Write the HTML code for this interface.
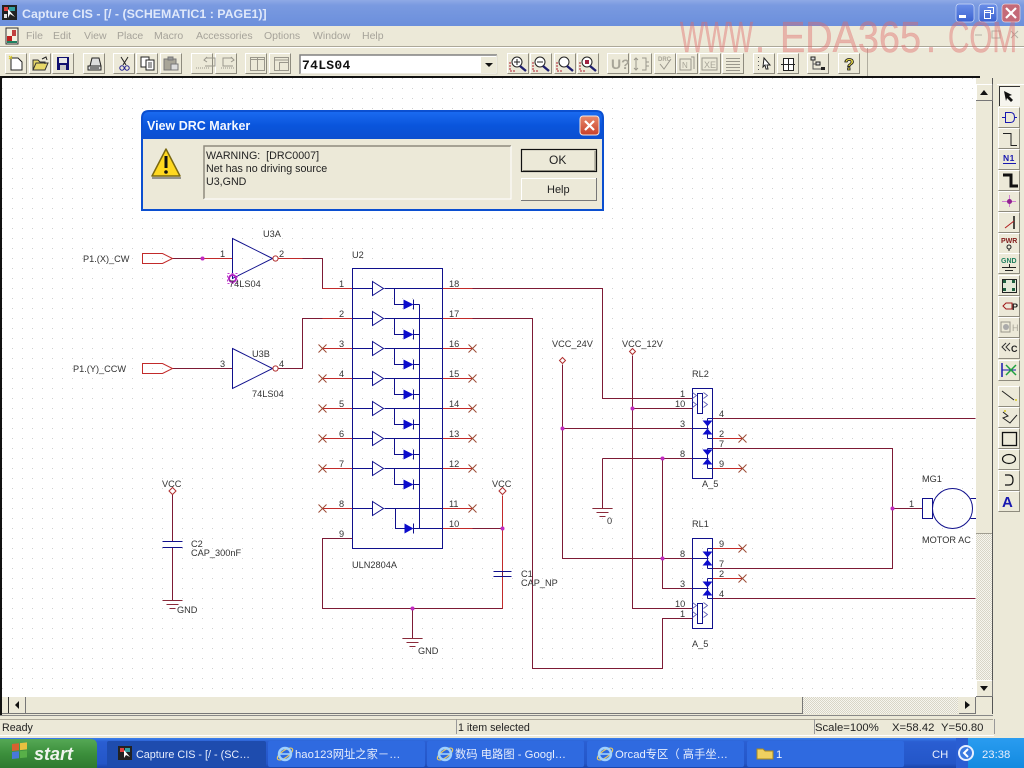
<!DOCTYPE html>
<html><head><meta charset="utf-8"><title>Capture CIS</title>
<style>
html,body{margin:0;padding:0;background:#ece9d8;overflow:hidden}
svg{display:block}
text{font-family:"Liberation Sans","Noto Sans CJK SC",sans-serif}
.w{fill:none;stroke:#7d1a35;stroke-width:1}
.p{fill:none;stroke:#c22a2a;stroke-width:1}
.b{fill:none;stroke:#10108c;stroke-width:1}
.f{fill:#0c0ccc;stroke:none}
.x{fill:none;stroke:#9c4a34;stroke-width:1}
.j{fill:#c02ac0}
.t{font-size:9.2px;fill:#333}
.m{font-size:10.5px;fill:#a6a39a}
.s{font-size:10.7px;fill:#222}
.k{font-size:11.3px;fill:#e8eefc}
.i{fill:none;stroke:#333;stroke-width:1}
.g{fill:none;stroke:#9a978c;stroke-width:1}
.wm{font-size:44px;fill:#e06a6a;fill-opacity:.42;stroke:#e06a6a;stroke-opacity:.3;stroke-width:.5}
</style></head><body>
<svg xmlns="http://www.w3.org/2000/svg" width="1024" height="768" viewBox="0 0 1024 768">
<defs>
<linearGradient id="tb" x1="0" y1="0" x2="0" y2="1"><stop offset="0" stop-color="#8fa9e6"/><stop offset=".2" stop-color="#7a9ae0"/><stop offset="1" stop-color="#6b8fdc"/></linearGradient>
<linearGradient id="dt" x1="0" y1="0" x2="0" y2="1"><stop offset="0" stop-color="#1a6af0"/><stop offset=".5" stop-color="#0a55dc"/><stop offset="1" stop-color="#0c4fd0"/></linearGradient>
<linearGradient id="task" x1="0" y1="0" x2="0" y2="1"><stop offset="0" stop-color="#3a80ee"/><stop offset=".12" stop-color="#2a5ed2"/><stop offset=".85" stop-color="#2456c8"/><stop offset="1" stop-color="#1a44a8"/></linearGradient>
<linearGradient id="st" x1="0" y1="0" x2="0" y2="1"><stop offset="0" stop-color="#55a855"/><stop offset=".5" stop-color="#3c8f3c"/><stop offset="1" stop-color="#2f7a30"/></linearGradient>
<linearGradient id="tray" x1="0" y1="0" x2="0" y2="1"><stop offset="0" stop-color="#2a9cf0"/><stop offset="1" stop-color="#128ae0"/></linearGradient>
<linearGradient id="red" x1="0" y1="0" x2="0" y2="1"><stop offset="0" stop-color="#e88a6c"/><stop offset="1" stop-color="#c8402a"/></linearGradient>
<linearGradient id="btn" x1="0" y1="0" x2="0" y2="1"><stop offset="0" stop-color="#6a8ee8"/><stop offset="1" stop-color="#3a62d0"/></linearGradient>
<pattern id="dots" x="2" y="8" width="10" height="10" patternUnits="userSpaceOnUse"><rect width="1" height="1" fill="#cfcfcf"/></pattern>
<pattern id="hatch" width="2" height="2" patternUnits="userSpaceOnUse"><rect width="2" height="2" fill="#f6f5ee"/><rect width="1" height="1" fill="#d8d5c6"/><rect x="1" y="1" width="1" height="1" fill="#d8d5c6"/></pattern>
<g id="tbtn"><rect width="22" height="21" fill="#ece9d8"/><path d="M.5 20.500V.5H21.500" fill="none" stroke="#fff"/><path d="M.5 20.500H21.500V.5" fill="none" stroke="#8e8b7e"/></g>
<g id="unit"><polygon points="372,-7 383,0 372,7" fill="none" stroke="#10108c" stroke-width="1"/><path class="b" d="M352 0H372M384 0H442M394 0V16H403"/><polygon class="f" points="403,11 413,16 403,21"/><path class="b" d="M413 11V21M413 16H419"/></g>
<g id="dd"><polygon class="f" points="-5,0 5,0 0,6"/></g>
<g id="du"><polygon class="f" points="-5,5 5,5 0,-1"/></g>
<g id="xx"><path class="x" d="M-4 -4L4 4M-4 4L4 -4"/></g>
<g id="gnd"><path d="M-10 0H10M-6 4H6M-3 8H3" fill="none" stroke="#8a2a3a" stroke-width="1"/></g>
<g id="coil"><rect x="697" y="5" width="5" height="20" fill="none" stroke="#10108c"/><path d="M692 10L696 7L692 4M703 10L707 7L703 4" fill="none" stroke="#5a5ab0" stroke-width=".8"/><path d="M692 19L696 16L692 13M703 19L707 16L703 13" fill="none" stroke="#5a5ab0" stroke-width=".8"/></g>
<g id="ie"><ellipse cx="8" cy="8" rx="9" ry="3.500" transform="rotate(-35 8 8)" fill="none" stroke="#e8c860" stroke-width="1.200"/><circle cx="8" cy="8" r="6" fill="none" stroke="#9fd0ff" stroke-width="2.400"/><path d="M3 8H13" stroke="#9fd0ff" stroke-width="1.600"/></g>
</defs>

<!-- base -->
<rect width="1024" height="768" fill="#ece9d8"/>
<!-- title bar -->
<rect width="1024" height="26" fill="url(#tb)"/>
<rect x="2" y="5" width="15" height="15" fill="#222"/><rect x="4" y="7" width="4" height="4" fill="#e04040"/><rect x="9" y="7" width="6" height="4" fill="#30a0a0"/><path d="M8 9L15 17L10 14L8 18Z" fill="#fff"/><rect x="4" y="14" width="3" height="4" fill="#e0e0e0"/>
<text x="22" y="18" style="font-size:12.400px;font-weight:bold;fill:#dfe8fa">Capture CIS - [/ - (SCHEMATIC1 : PAGE1)]</text>
<rect x="956" y="4" width="18" height="18" rx="3" fill="url(#btn)" stroke="#cfdcf8" stroke-width=".7"/><rect x="959" y="15" width="7" height="3" fill="#fff"/>
<rect x="979" y="4" width="18" height="18" rx="3" fill="url(#btn)" stroke="#cfdcf8" stroke-width=".7"/><path d="M984.500 10.500h6v2h-6zM984.500 12.500v6h6v-6M987.500 7.500h6v6h-3" fill="none" stroke="#fff"/>
<rect x="1002" y="4" width="18" height="18" rx="3" fill="#c46a78" stroke="#e8d4d8" stroke-width=".7"/><path d="M1006 8L1016 18M1016 8L1006 18" stroke="#fff" stroke-width="2.200"/>
<!-- menu -->
<rect y="26" width="1024" height="20" fill="#ece9d8"/>
<rect x="6" y="28" width="12" height="16" fill="#f4f0e0" stroke="#333"/><rect x="7" y="36" width="5" height="5" fill="#c02020"/><rect x="12" y="30" width="4" height="6" fill="#c04040"/><rect x="7" y="41" width="10" height="2" fill="#208060"/>
<text class="m" x="26" y="39">File</text><text class="m" x="53" y="39">Edit</text><text class="m" x="84" y="39">View</text><text class="m" x="117" y="39">Place</text><text class="m" x="154" y="39">Macro</text><text class="m" x="196" y="39">Accessories</text><text class="m" x="264" y="39">Options</text><text class="m" x="313" y="39">Window</text><text class="m" x="362" y="39">Help</text>
<path d="M975 35h7M992 31h8v7h-8zM1011 31l7 7M1018 31l-7 7" fill="none" stroke="#b4b1a6"/>
<path d="M0 46.500H1024" stroke="#aca899"/><path d="M0 47.500H1024" stroke="#fff"/>
<!-- toolbar -->
<path d="M867.500 48V76" stroke="#b0ad9f"/>
<use href="#tbtn" x="5" y="53"/><use href="#tbtn" x="29" y="53"/><use href="#tbtn" x="52" y="53"/><use href="#tbtn" x="83" y="53"/><use href="#tbtn" x="113" y="53"/><use href="#tbtn" x="136" y="53"/><use href="#tbtn" x="160" y="53"/><use href="#tbtn" x="191" y="53"/><use href="#tbtn" x="215" y="53"/><use href="#tbtn" x="245" y="53"/><use href="#tbtn" x="269" y="53"/>
<use href="#tbtn" x="507" y="53"/><use href="#tbtn" x="530" y="53"/><use href="#tbtn" x="554" y="53"/><use href="#tbtn" x="577" y="53"/><use href="#tbtn" x="607" y="53"/><use href="#tbtn" x="630" y="53"/><use href="#tbtn" x="654" y="53"/><use href="#tbtn" x="676" y="53"/><use href="#tbtn" x="699" y="53"/><use href="#tbtn" x="722" y="53"/><use href="#tbtn" x="753" y="53"/><use href="#tbtn" x="777" y="53"/><use href="#tbtn" x="807" y="53"/><use href="#tbtn" x="838" y="53"/>
<!-- left icons -->
<path d="M11 58h7l4 4v8h-11z" fill="#fff" stroke="#222"/><path d="M9 56l3 3M12 56l-3 3" stroke="#d8c820"/>
<path d="M33 70l3-7h12l-3 7zM33 70v-10h5l2 2h5v2" fill="#e8d868" stroke="#333"/><path d="M42 59l4-2 1 3" fill="none" stroke="#222"/>
<rect x="57" y="57" width="12" height="13" fill="#101070"/><rect x="59" y="58" width="8" height="5" fill="#e8e8e8"/><rect x="60" y="65" width="6" height="5" fill="#c8c8c8"/>
<path d="M88 66h13v4h-13zM90 66l2-8h7l2 8" fill="#ddd" stroke="#222"/><path d="M90 68h9" stroke="#222"/>
<path d="M121 57l5 8M128 57l-5 8" stroke="#222" fill="none"/><circle cx="122" cy="68" r="2.200" fill="none" stroke="#202090"/><circle cx="127" cy="68" r="2.200" fill="none" stroke="#202090"/>
<rect x="141" y="57" width="8" height="10" fill="#fff" stroke="#222"/><rect x="146" y="60" width="8" height="10" fill="#fff" stroke="#222"/><path d="M148 63h4M148 65h4M148 67h4" stroke="#444"/>
<rect x="164" y="59" width="12" height="11" fill="#a8a598" stroke="#777"/><rect x="168" y="57" width="5" height="3" fill="#999" stroke="#777"/><rect x="171" y="64" width="7" height="6" fill="#ddd" stroke="#777"/>
<path d="M206 58h9v8h-10M207 62l-3-2 3-3" class="g"/><path d="M196 68h14" class="g" stroke-dasharray="1 1"/>
<path d="M232 58h-9v8h10M231 62l3-2-3-3" class="g"/><path d="M221 68h14" class="g" stroke-dasharray="1 1"/>
<rect x="250.500" y="57.500" width="14" height="13" class="g"/><path d="M257.500 57v13" class="g"/><path d="M250 59.500h14" class="g"/>
<rect x="274.500" y="57.500" width="14" height="13" class="g"/><path d="M274 60h14" class="g" stroke-width="2"/><rect x="279.500" y="62.500" width="9" height="8" class="g"/>
<!-- combo -->
<rect x="300" y="55" width="197" height="19" fill="#fff"/><path d="M300 74V55H497" fill="none" stroke="#808080" stroke-width="1.500"/><path d="M300 74H497V55" fill="none" stroke="#d8d5c6"/>
<rect x="481" y="57" width="15" height="16" fill="#ece9d8"/><polygon points="485,63 493,63 489,67" fill="#111"/>
<text x="302" y="69" style="font-family:'Liberation Mono',monospace;font-size:13px;font-weight:bold;fill:#111;letter-spacing:.3px">74LS04</text>
<!-- zoom icons -->
<g fill="#fff" stroke="#222"><circle cx="517" cy="62" r="5"/><circle cx="540" cy="62" r="5"/><circle cx="564" cy="62" r="5"/><circle cx="587" cy="62" r="5"/></g>
<path d="M520 66l6 5M543 66l6 5M567 66l6 5M590 66l6 5" stroke="#202070" stroke-width="2.400"/>
<path d="M514 62h6M517 59v6M537 62h6" stroke="#222"/><rect x="585" y="60" width="4" height="4" fill="#a02040"/>
<path d="M510 62v9h6M533 62v9h6M580 62v9h6M557 62v9h6" stroke="#b02030" fill="none" stroke-dasharray="2 1"/>
<!-- disabled group -->
<text x="611" y="69" style="font-size:14px;font-weight:bold;fill:#a8a598">U?</text>
<path d="M636 58v12M634 60l2-2 2 2M634 68l2 2 2-2M642 58h4v12h-4M646 62h3M646 66h3" class="g"/>
<text x="658" y="61" style="font-size:6px;font-weight:bold;fill:#a8a598">DRC</text><path d="M660 64l4 5 7-10" class="g" stroke-width="1.600"/>
<rect x="680" y="59" width="11" height="11" class="g"/><text x="682" y="68" style="font-size:8px;fill:#a8a598">N</text><path d="M691 57h3v12" class="g"/>
<rect x="702" y="58" width="15" height="12" class="g"/><text x="704" y="68" style="font-size:9px;fill:#a8a598">XE</text>
<path d="M726 58.500h14M726 61.500h14M726 64.500h14M726 67.500h14M726 70.500h14" class="g"/>
<!-- group right -->
<path d="M758.500 57v14" stroke="#555" stroke-dasharray="1 3" fill="none"/><path d="M764 58l6 7-3 0 1 4-2 0-1-4-2 2z" fill="#fff" stroke="#222"/>
<rect x="783.500" y="58.500" width="10" height="12" fill="#fff" stroke="#222"/><path d="M781 64.500h14M788.500 58v12" stroke="#222"/>
<rect x="811" y="57" width="4" height="3" fill="#ddd" stroke="#222"/><rect x="816" y="62" width="4" height="3" fill="#ddd" stroke="#222"/><rect x="821" y="67" width="4" height="3" fill="#222"/><path d="M813 60v4h3M813 64v5h8" stroke="#555" fill="none"/>
<text x="844" y="70" style="font-size:17px;font-weight:bold;fill:#e8d848;stroke:#111;stroke-width:.8">?</text>

<!-- canvas -->
<rect x="0" y="76" width="993" height="642" fill="#ece9d8"/>
<rect x="2" y="78" width="974" height="619" fill="#fff"/>
<rect x="2" y="78" width="974" height="619" fill="url(#dots)"/>
<path d="M1 76V716" stroke="#111" stroke-width="2"/><path d="M0 77H980" stroke="#111" stroke-width="2"/>

<g transform="translate(.5 .5)">
<!-- wires -->
<path class="w" d="M172 258H232M278 258H322V288H352M278 368H302V318H352M172 368H232"/>
<path class="p" d="M200 258H232M278 258H302M322 288H352M322 318H352"/>
<polygon class="p" points="142,253 162,253 172,258 162,263 142,263"/>
<polygon class="p" points="142,363 162,363 172,368 162,373 142,373"/>
<path class="w" d="M442 288H602V398H692M442 318H532V668H662V618H692"/>
<path class="w" d="M562 364V558H692M562 428H692M632 355V608H692M632 408H692M602 458V508M602 458H692M662 458V588H692"/>
<path class="w" d="M712 418H975M712 448H892V568H712M712 598H975M892 508H922"/>
<path class="p" d="M712 438H742M712 468H742M712 548H742M712 578H742"/>
<path class="w" d="M352 538H322V608H502V528H442M412 608V638"/>
<path class="p" d="M502 495V571M502 576V608M442 528H472"/>
<path class="w" d="M172 494V541M172 547V600"/>
<path class="p" d="M322 348H352M322 378H352M322 408H352M322 438H352M322 468H352M322 508H352M442 348H472M442 378H472M442 408H472M442 438H472M442 468H472M442 508H472M442 288H472M442 318H472"/>
<use href="#xx" x="322" y="348"/><use href="#xx" x="322" y="378"/><use href="#xx" x="322" y="408"/><use href="#xx" x="322" y="438"/><use href="#xx" x="322" y="468"/><use href="#xx" x="322" y="508"/>
<use href="#xx" x="472" y="348"/><use href="#xx" x="472" y="378"/><use href="#xx" x="472" y="408"/><use href="#xx" x="472" y="438"/><use href="#xx" x="472" y="468"/><use href="#xx" x="472" y="508"/>
<use href="#xx" x="742" y="438"/><use href="#xx" x="742" y="468"/><use href="#xx" x="742" y="548"/><use href="#xx" x="742" y="578"/>
<!-- caps -->
<path d="M162 541H182M162 547H182M493 571H511M493 576H511" stroke="#10108c" fill="none"/>
<use href="#gnd" x="172" y="600"/><use href="#gnd" x="412" y="638"/><use href="#gnd" x="602" y="508"/>
<path d="M502 487l3.500 3.500-3.500 3.500-3.500-3.500zM172 487l3.500 3.500-3.500 3.500-3.500-3.500zM562 357l3 3-3 3-3-3zM632 348l3 3-3 3-3-3z" fill="#fff" stroke="#b03030"/>
<!-- inverters -->
<path class="b" d="M232 238L272 258L232 278Z M232 348L272 368L232 388Z"/>
<circle cx="275" cy="258" r="2.600" fill="#fff" stroke="#b03030"/><circle cx="275" cy="368" r="2.600" fill="#fff" stroke="#b03030"/>
<circle cx="232" cy="278" r="3.500" fill="none" stroke="#b020c0" stroke-width="2"/><rect x="227" y="273" width="10" height="10" fill="none" stroke="#c040d0" stroke-dasharray="2 2"/>
<!-- U2 -->
<rect x="352" y="268" width="90" height="280" class="b"/>
<use href="#unit" y="288"/><use href="#unit" y="318"/><use href="#unit" y="348"/><use href="#unit" y="378"/><use href="#unit" y="408"/><use href="#unit" y="438"/><use href="#unit" y="468"/>
<g transform="translate(0,508)"><polygon points="372,-7 383,0 372,7" fill="none" stroke="#10108c" stroke-width="1"/><path class="b" d="M352 0H372M384 0H442M395 0V20H404"/><polygon class="f" points="404,15 413,20 404,25"/><path class="b" d="M413 15V25M413 20H442"/></g>
<path class="b" d="M419 304V528"/>
<!-- relays -->
<rect x="692" y="388" width="20" height="90" class="b"/><rect x="692" y="538" width="20" height="90" class="b"/>
<use href="#coil" y="388"/><use href="#coil" y="598"/>
<path class="b" d="M692 428H708M707 418V438M707 418H712M707 438H712M692 458H708M707 448V468M707 448H712M707 468H712"/>
<use href="#dd" x="707" y="420"/><use href="#du" x="707" y="429"/><use href="#dd" x="707" y="449"/><use href="#du" x="707" y="459"/>
<path class="b" d="M692 558H708M707 548V568M707 548H712M707 568H712M692 588H708M707 578V598M707 578H712M707 598H712"/>
<use href="#dd" x="707" y="551"/><use href="#du" x="707" y="560"/><use href="#dd" x="707" y="581"/><use href="#du" x="707" y="590"/>
<!-- motor -->
<rect x="922" y="498" width="10" height="20" class="b"/><circle cx="952" cy="508" r="20" class="b"/><path class="b" d="M970 498H976M970 518H976"/>
<!-- junctions -->
<g class="j"><circle cx="202" cy="258" r="2"/><circle cx="502" cy="528" r="2"/><circle cx="412" cy="608" r="2"/><circle cx="562" cy="428" r="2"/><circle cx="632" cy="408" r="2"/><circle cx="662" cy="458" r="2"/><circle cx="662" cy="558" r="2"/><circle cx="892" cy="508" r="2"/></g>
</g>
<!-- labels -->
<g class="t">
<text x="83" y="262">P1.(X)_CW</text><text x="73" y="372">P1.(Y)_CCW</text>
<text x="263" y="237">U3A</text><text x="229" y="287">74LS04</text><text x="252" y="357">U3B</text><text x="252" y="397">74LS04</text>
<text x="220" y="257">1</text><text x="279" y="257">2</text><text x="220" y="367">3</text><text x="279" y="367">4</text>
<text x="352" y="258">U2</text><text x="352" y="568">ULN2804A</text>
<text x="339" y="287">1</text><text x="339" y="317">2</text><text x="339" y="347">3</text><text x="339" y="377">4</text><text x="339" y="407">5</text><text x="339" y="437">6</text><text x="339" y="467">7</text><text x="339" y="507">8</text><text x="339" y="537">9</text>
<text x="449" y="287">18</text><text x="449" y="317">17</text><text x="449" y="347">16</text><text x="449" y="377">15</text><text x="449" y="407">14</text><text x="449" y="437">13</text><text x="449" y="467">12</text><text x="449" y="507">11</text><text x="449" y="527">10</text>
<text x="162" y="487">VCC</text><text x="191" y="547">C2</text><text x="191" y="556">CAP_300nF</text><text x="177" y="613">GND</text>
<text x="492" y="487">VCC</text><text x="521" y="577">C1</text><text x="521" y="586">CAP_NP</text><text x="418" y="654">GND</text>
<text x="552" y="347">VCC_24V</text><text x="622" y="347">VCC_12V</text>
<text x="607" y="524">0</text>
<text x="692" y="377">RL2</text><text x="702" y="487">A_5</text><text x="692" y="527">RL1</text><text x="692" y="647">A_5</text>
<text x="680" y="397">1</text><text x="675" y="407">10</text><text x="680" y="427">3</text><text x="680" y="457">8</text>
<text x="719" y="417">4</text><text x="719" y="437">2</text><text x="719" y="447">7</text><text x="719" y="467">9</text>
<text x="680" y="557">8</text><text x="680" y="587">3</text><text x="675" y="607">10</text><text x="680" y="617">1</text>
<text x="719" y="547">9</text><text x="719" y="567">7</text><text x="719" y="577">2</text><text x="719" y="597">4</text>
<text x="909" y="507">1</text><text x="922" y="482">MG1</text><text x="922" y="543">MOTOR AC</text>
</g>

<!-- dialog -->
<path d="M141 118q0-8 8-8H596q8 0 8 8V211H141Z" fill="#0b4fd0"/>
<path d="M143 118q0-6 6-6H596q6 0 6 6V139H143Z" fill="url(#dt)"/>
<rect x="143" y="139" width="459" height="70" fill="#ece9d8"/>
<text x="147" y="130" style="font-size:12.500px;font-weight:bold;fill:#f4f8ff">View DRC Marker</text>
<rect x="580" y="116" width="19" height="19" rx="3" fill="url(#red)" stroke="#f4e8e0"/><path d="M585 121l9 9M594 121l-9 9" stroke="#fff" stroke-width="2.200"/>
<polygon points="166,149 180,176 152,176" fill="#ffd820" stroke="#7a6810" stroke-width="1.500" stroke-linejoin="round"/><path d="M152 178H181" stroke="#777" stroke-width="1.500"/><path d="M166 156V168" stroke="#111" stroke-width="3"/><circle cx="166" cy="172" r="1.800" fill="#111"/>
<rect x="204" y="146" width="307" height="53" fill="#ece9d8"/><path d="M204 199V146H511" fill="none" stroke="#8e8b7e" stroke-width="1.500"/><path d="M204 199H511V146" fill="none" stroke="#fff"/>
<text class="s" x="206" y="159">WARNING:&#160; [DRC0007]</text><text class="s" x="206" y="172">Net has no driving source</text><text class="s" x="206" y="185">U3,GND</text>
<rect x="521.500" y="149.500" width="75" height="22" fill="#ece9d8" stroke="#111" stroke-width="1.200"/><path d="M523 170.500H595V151" fill="none" stroke="#8e8b7e"/>
<rect x="521" y="178" width="75" height="22" fill="#ece9d8"/><path d="M521.500 200V178.500H596" fill="none" stroke="#fff"/><path d="M521 200.500H596.500V178" fill="none" stroke="#777"/>
<text x="549" y="164" style="font-size:12px;fill:#222">OK</text><text x="547" y="193" style="font-size:11px;fill:#222">Help</text>

<!-- v scrollbar -->
<rect x="976" y="84" width="17" height="449" fill="#ece9d8"/><rect x="976" y="533" width="17" height="147" fill="url(#hatch)"/>
<path d="M976 84.500H992.500V533.500H976" fill="none" stroke="#a09d90"/><path d="M992.500 78V714" stroke="#555"/>
<rect x="976" y="84" width="16" height="16" fill="#ece9d8"/><path d="M976.500 100V84.500H992" fill="none" stroke="#fff"/><path d="M976 100.500H992.500V84" fill="none" stroke="#777"/><polygon points="980,95 988,95 984,90" fill="#111"/>
<rect x="976" y="680" width="16" height="16" fill="#ece9d8"/><path d="M976.500 696V680.500H992" fill="none" stroke="#fff"/><path d="M976 696.500H992.500V680" fill="none" stroke="#777"/><polygon points="980,686 988,686 984,691" fill="#111"/>
<!-- h scrollbar -->
<rect x="2" y="697" width="973" height="17" fill="#ece9d8"/><rect x="803" y="697" width="155" height="17" fill="url(#hatch)"/>
<path d="M2 713.500H802.500V697" fill="none" stroke="#777"/><path d="M8.500 697V713" stroke="#333"/>
<rect x="10" y="697" width="15" height="16" fill="#ece9d8"/><path d="M25.500 697V713.500H10" fill="none" stroke="#777"/><polygon points="19,701 19,709 15,705" fill="#111"/>
<rect x="959" y="697" width="16" height="16" fill="#ece9d8"/><path d="M975.500 697V713.500H959" fill="none" stroke="#777"/><polygon points="965,701 965,709 970,705" fill="#111"/>
<path d="M0 715.500H993" stroke="#888"/>

<!-- right toolbar -->
<rect x="993" y="76" width="31" height="640" fill="#ece9d8"/>
<path d="M997 84.500H1024" stroke="#fff"/>
<rect x="999" y="86" width="21" height="20" fill="#f6f5ee"/><path d="M999.500 106V86.500H1020" stroke="#333" fill="none"/><path d="M1004 91l8 4-3 1 4 4-2 2-4-4-1 3z" fill="#111"/>
<use href="#tbtn" x="998" y="107"/><use href="#tbtn" x="998" y="128"/><use href="#tbtn" x="998" y="149"/><use href="#tbtn" x="998" y="170"/><use href="#tbtn" x="998" y="191"/><use href="#tbtn" x="998" y="212"/><use href="#tbtn" x="998" y="233"/><use href="#tbtn" x="998" y="253"/><use href="#tbtn" x="998" y="275"/><use href="#tbtn" x="998" y="296"/><use href="#tbtn" x="998" y="317"/><use href="#tbtn" x="998" y="338"/><use href="#tbtn" x="998" y="360"/><use href="#tbtn" x="998" y="386"/><use href="#tbtn" x="998" y="407"/><use href="#tbtn" x="998" y="428"/><use href="#tbtn" x="998" y="449"/><use href="#tbtn" x="998" y="470"/><use href="#tbtn" x="998" y="491"/>
<path d="M1002 117.500h3M1014 117.500h3M1005.500 112.500h5q4 0 4 5t-4 5h-5z" fill="none" stroke="#1818b0"/>
<path d="M1003 133.500h8v12h6" fill="none" stroke="#222"/>
<text x="1003" y="161" style="font-size:8.500px;font-weight:bold;fill:#1818b0;letter-spacing:.5px">N1</text><path d="M1003 163.500h13" stroke="#1818b0"/>
<path d="M1003 175h8v11h7" fill="none" stroke="#111" stroke-width="3"/>
<path d="M1002 201.500h14M1009.500 195v12" stroke="#d080d0"/><circle cx="1009.500" cy="201.500" r="2.500" fill="#902090"/>
<path d="M1014 216v13" stroke="#111" stroke-width="1.500"/><path d="M1005 228l9-7" stroke="#b02020"/>
<text x="1001" y="243" style="font-size:7px;font-weight:bold;fill:#801818">PWR</text><circle cx="1009" cy="247" r="2" fill="none" stroke="#222"/><path d="M1009 249v2" stroke="#222"/>
<text x="1001" y="263" style="font-size:7px;font-weight:bold;fill:#208060">GND</text><path d="M1002 267.500h14M1005 270.500h8M1009.500 264v3" stroke="#222"/>
<rect x="1002.500" y="279.500" width="14" height="13" fill="#e4ead8" stroke="#222"/><g fill="#206040"><rect x="1003" y="280" width="3" height="3"/><rect x="1012" y="280" width="3" height="3"/><rect x="1003" y="288" width="3" height="3"/><rect x="1012" y="288" width="3" height="3"/></g>
<path d="M1003 306l3-3h6v6h-6z" fill="none" stroke="#a01818"/><text x="1012" y="310" style="font-size:9px;font-weight:bold;fill:#222">P</text>
<rect x="1001" y="322" width="9" height="10" class="g"/><circle cx="1006" cy="327" r="3" fill="#aaa"/><text x="1012" y="331" style="font-size:9px;fill:#a8a598">H</text>
<path d="M1006 343l-4 4 4 4M1010 343l-4 4 4 4" fill="none" stroke="#333"/><text x="1011" y="352" style="font-size:9px;font-weight:bold;fill:#222">C</text>
<path d="M1002 363v14" stroke="#1818b0" stroke-width="1.500"/><path d="M1002 370h14" stroke="#1818b0"/><path d="M1006 365l10 10M1016 365l-10 10" stroke="#20a040" stroke-width="1.500"/>
<path d="M1002 391l12 9" stroke="#222"/><circle cx="1016" cy="400" r="1" fill="#d8c820"/>
<path d="M1003 412l5 4-5 2 7 5 7-8" fill="none" stroke="#222"/><circle cx="1005" cy="411" r="1" fill="#d8c820"/>
<rect x="1002.500" y="432.500" width="14" height="13" fill="none" stroke="#111" stroke-width="1.300"/>
<ellipse cx="1009" cy="459" rx="6.500" ry="4.500" fill="none" stroke="#111" stroke-width="1.200"/>
<path d="M1005 475h4q4 0 4 5t-4 5h-4" fill="none" stroke="#111" stroke-width="1.200"/>
<text x="1002" y="507" style="font-size:15px;font-weight:bold;fill:#1818b0">A</text>

<!-- status bar -->
<rect y="716" width="1024" height="22" fill="#ece9d8"/>
<path d="M0 719.500H993" stroke="#aca899"/><path d="M456.500 719V734M814.500 719V734M994.500 719V734" stroke="#999"/><path d="M0 735.500H994" stroke="#fff"/>
<text class="s" x="2" y="731">Ready</text><text class="s" x="458" y="731">1 item selected</text><text x="815" y="731" style="font-size:11.300px;fill:#222">Scale=100%</text><text x="892" y="731" style="font-size:11.300px;fill:#222">X=58.42</text><text x="941" y="731" style="font-size:11.300px;fill:#222">Y=50.80</text>

<!-- taskbar -->
<rect y="738" width="1024" height="30" fill="url(#task)"/>
<path d="M0 739H90q7 0 7 6V768H0Z" fill="url(#st)"/>
<g transform="translate(12,744) skewY(-6)"><rect width="7" height="7" fill="#d86030"/><rect x="8" width="7" height="7" fill="#e8c040"/><rect y="8" width="7" height="7" fill="#4878d8"/><rect x="8" y="8" width="7" height="7" fill="#58b048"/></g>
<text x="34" y="760" style="font-size:18px;font-weight:bold;font-style:italic;fill:#f0f4ee">start</text>
<rect x="107" y="741" width="159" height="26" rx="2" fill="#1e4cae"/>
<rect x="268" y="741" width="157" height="26" rx="2" fill="#2f6ae0"/><rect x="427" y="741" width="157" height="26" rx="2" fill="#2f6ae0"/><rect x="587" y="741" width="157" height="26" rx="2" fill="#2f6ae0"/><rect x="747" y="741" width="157" height="26" rx="2" fill="#2f6ae0"/>
<rect x="118" y="746" width="14" height="14" fill="#222"/><rect x="120" y="748" width="4" height="4" fill="#e04040"/><rect x="125" y="748" width="5" height="4" fill="#30a0a0"/><path d="M124 750l6 7-4-2-2 3z" fill="#fff"/>
<use href="#ie" x="277" y="746"/><use href="#ie" x="437" y="746"/><use href="#ie" x="597" y="746"/>
<path d="M757 749h6l2 2h8v8h-16z" fill="#f0d060" stroke="#a88820"/>
<text x="136" y="758" style="font-size:10.800px;fill:#e8eefc">Capture CIS - [/ - (SC…</text>
<text class="k" x="295" y="758">hao123网址之家－…</text>
<text class="k" x="455" y="758">数码 电路图 - Googl…</text>
<text class="k" x="615" y="758">Orcad专区（ 高手坐…</text>
<text class="k" x="776" y="758">1</text>
<rect x="968" y="738" width="56" height="30" fill="url(#tray)"/>
<rect x="956" y="738" width="12" height="30" fill="#2a5ed2"/>
<text class="k" x="932" y="758">CH</text>
<circle cx="966" cy="753" r="8" fill="#e8f0ff"/><circle cx="966" cy="753" r="6" fill="#3a7ae0"/><path d="M968 749l-4 4 4 4" fill="none" stroke="#fff" stroke-width="2"/>
<text class="k" x="982" y="758">23:38</text>

<!-- watermark -->
<text class="wm" x="680" y="52" textLength="73" lengthAdjust="spacingAndGlyphs">WWW</text>
<text class="wm" x="755" y="52" textLength="10" lengthAdjust="spacingAndGlyphs">.</text>
<text class="wm" x="780" y="52" textLength="141" lengthAdjust="spacingAndGlyphs">EDA365</text>
<text class="wm" x="926" y="52" textLength="10" lengthAdjust="spacingAndGlyphs">.</text>
<text class="wm" x="948" y="52" textLength="69" lengthAdjust="spacingAndGlyphs">COM</text>
</svg>
</body></html>
